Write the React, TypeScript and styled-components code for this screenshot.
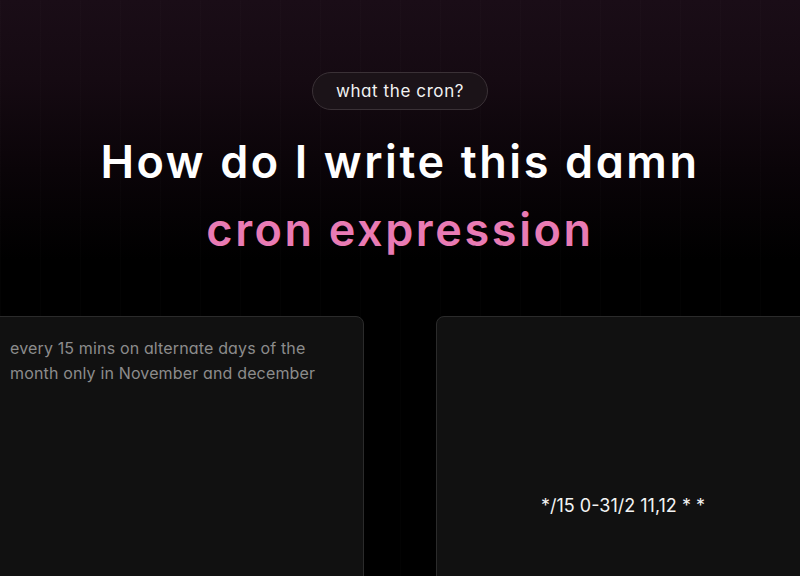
import React from 'react'
import styled, { createGlobalStyle } from 'styled-components'

const GlobalStyle = createGlobalStyle`
  html, body {
    margin: 0;
    padding: 0;
    background: #000;
  }
  body {
    font-family: 'Inter', 'Lato', sans-serif;
    font-feature-settings: 'cv11' 1;
    overflow: hidden;
  }
`

const Page = styled.div`
  width: 800px;
  height: 576px;
  overflow: hidden;
  background:
    repeating-linear-gradient(
      90deg,
      rgba(255, 255, 255, 0.012) 0px,
      rgba(255, 255, 255, 0.012) 1px,
      transparent 1px,
      transparent 40px
    ),
    linear-gradient(180deg, #1a0d17 0px, #150a12 80px, #0a0408 170px, #000 260px);
  display: flex;
  flex-direction: column;
  align-items: center;
  padding-top: 72px;
  box-sizing: border-box;
`

const Badge = styled.div`
  flex-shrink: 0;
  height: 38px;
  padding: 0 23px;
  box-sizing: border-box;
  border-radius: 19px;
  border: 1px solid #3a3136;
  background: #1b1318;
  color: #f2f2f2;
  font-size: 17px;
  letter-spacing: 0.6px;
  display: flex;
  align-items: center;
`

const Title = styled.h1`
  flex-shrink: 0;
  margin: 18px 0 0;
  text-align: center;
  font-size: 45px;
  font-weight: 600;
  line-height: 68px;
  color: #fff;
  letter-spacing: 2.6px;
`

const Accent = styled.span`
  display: block;
  color: #e97bb4;
`

const Cards = styled.div`
  flex-shrink: 0;
  margin-top: 52px;
  display: grid;
  grid-template-columns: 374px 374px;
  gap: 72px;
`

const Card = styled.div<{ $center?: boolean }>`
  height: 378px;
  box-sizing: border-box;
  background: #111111;
  border: 1px solid #2b2b2b;
  border-radius: 8px;
  padding: 19px 19px;
  display: flex;
  align-items: ${p => (p.$center ? 'center' : 'flex-start')};
  justify-content: ${p => (p.$center ? 'center' : 'flex-start')};
`

const Prompt = styled.p`
  margin: 0;
  font-size: 16px;
  line-height: 25px;
  letter-spacing: 0.15px;
  color: #8c8c8c;
`

const Expression = styled.div`
  font-size: 18px;
  color: #f4f4f4;
`

export default function App() {
  return (
    <>
      <GlobalStyle />
      <Page>
        <Badge>what the cron?</Badge>
        <Title>
          How do I write this damn
          <Accent>cron expression</Accent>
        </Title>
        <Cards>
          <Card>
            <Prompt>
              every 15 mins on alternate days of the
              <br />
              month only in November and december
            </Prompt>
          </Card>
          <Card $center>
            <Expression>*/15 0-31/2 11,12 * *</Expression>
          </Card>
        </Cards>
      </Page>
    </>
  )
}
